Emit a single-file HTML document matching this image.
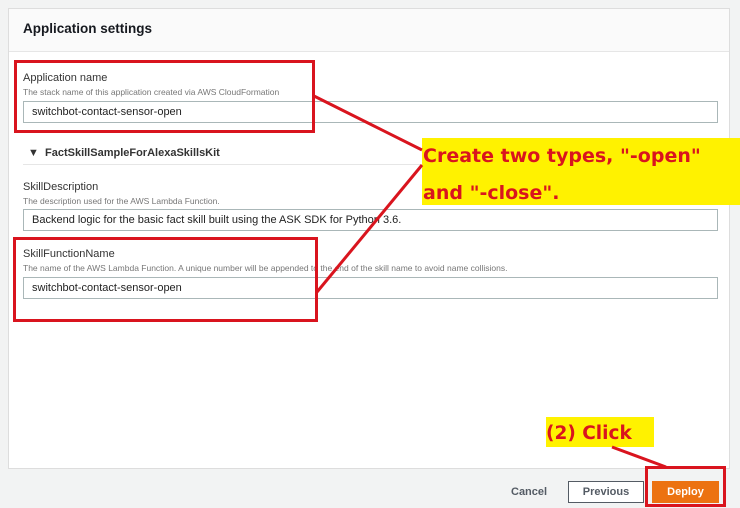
<!DOCTYPE html><html><head><style>
body{margin:0;width:740px;height:508px;background:#f2f3f3;font-family:"Liberation Sans",sans-serif;position:relative;overflow:hidden}
.a{position:absolute}
.panel{left:8px;top:8px;width:722px;height:461px;background:#fff;border:1px solid #ddd;box-sizing:border-box}
.hdr{left:9px;top:9px;width:720px;height:42px;background:#fafafa;border-bottom:1px solid #e6e6e6}
.inp{position:absolute;left:23px;width:695px;height:22px;border:1px solid #aab7b8;box-sizing:border-box;font-size:11px;color:#222;padding-left:8px;line-height:20px;background:#fff}
.lbl{position:absolute;left:23px;font-size:11px;color:#333}
.ds{position:absolute;left:23px;font-size:8.5px;color:#777}
.rb{position:absolute;border:3px solid #d9141e;box-sizing:border-box}
.y{position:absolute;background:#fff200;color:#d9141e;font-weight:bold;font-family:"DejaVu Sans",sans-serif}
</style></head><body>
<div class="a panel"></div>
<div class="a hdr"></div>
<div class="a" style="left:23px;top:21px;font-size:13.5px;font-weight:bold;color:#16191f">Application settings</div>
<div class="lbl" style="top:72px">Application name</div>
<div class="ds" style="top:87px">The stack name of this application created via AWS CloudFormation</div>
<div class="inp" style="top:101px">switchbot-contact-sensor-open</div>
<div class="a" style="left:28px;top:147px;font-size:11px;font-weight:bold;color:#333">▼&nbsp; FactSkillSampleForAlexaSkillsKit</div>
<div class="a" style="left:23px;top:164px;width:695px;border-top:1px solid #e6e6e6"></div>
<div class="lbl" style="top:181px">SkillDescription</div>
<div class="ds" style="top:196px">The description used for the AWS Lambda Function.</div>
<div class="inp" style="top:209px">Backend logic for the basic fact skill built using the ASK SDK for Python 3.6.</div>
<div class="lbl" style="top:248px">SkillFunctionName</div>
<div class="ds" style="top:263px">The name of the AWS Lambda Function. A unique number will be appended to the end of the skill name to avoid name collisions.</div>
<div class="inp" style="top:277px">switchbot-contact-sensor-open</div>
<div class="rb" style="left:14px;top:60px;width:301px;height:73px"></div>
<div class="rb" style="left:13px;top:237px;width:305px;height:85px"></div>
<div class="y" style="left:422px;top:138px;width:318px;height:67px;font-size:19px;line-height:37px;padding-left:1px;box-sizing:border-box;white-space:nowrap">Create two types, "-open"<br>and "-close".</div>
<div class="y" style="left:546px;top:417px;width:108px;height:30px;font-size:18.5px;line-height:33px">(2) Click</div>
<svg class="a" style="left:0;top:0" width="740" height="508"><g stroke="#d9141e" stroke-width="3"><line x1="314" y1="96" x2="422" y2="150"/><line x1="317" y1="292" x2="422" y2="165"/><line x1="612" y1="447" x2="666" y2="467"/></g></svg>
<div class="a" style="left:511px;top:486px;font-size:11px;font-weight:bold;color:#545b64">Cancel</div>
<div class="a" style="left:568px;top:481px;width:76px;height:22px;border:1px solid #545b64;box-sizing:border-box;background:#fff;font-size:11px;font-weight:bold;color:#545b64;text-align:center;line-height:21px">Previous</div>
<div class="a" style="left:652px;top:481px;width:67px;height:22px;background:#ec7211;font-size:11px;font-weight:bold;color:#fff;text-align:center;line-height:22px">Deploy</div>
<div class="rb" style="left:645px;top:466px;width:81px;height:41px"></div>
</body></html>
